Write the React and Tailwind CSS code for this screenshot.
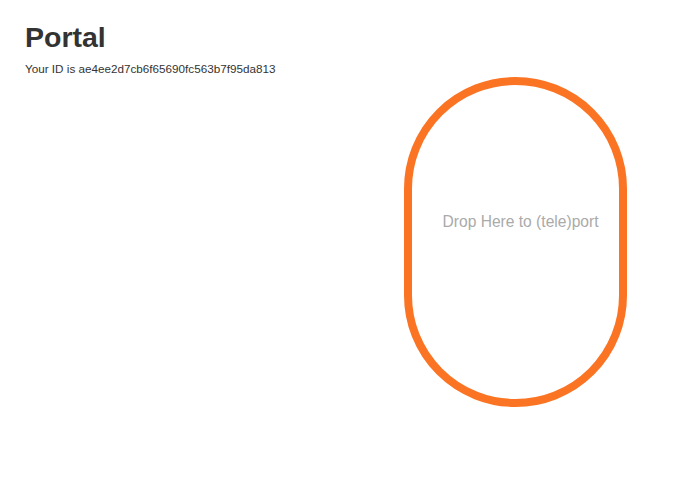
export default function App() {
  return (
    <div className="min-h-screen bg-white pl-[25px] font-['Helvetica_Neue','Liberation_Sans',Arial,sans-serif] text-[#333]">
      <h1 className="pt-[21px] text-[28.5px] font-bold leading-[32px]">Portal</h1>
      <p className="mt-[8px] text-[11.7px] leading-[16px]">Your ID is ae4ee2d7cb6f65690fc563b7f95da813</p>
      <div className="ml-[379px] flex h-[330px] w-[223px] flex-col items-center rounded-full border-[8px] border-[#fb7423] pt-[128px]">
        <span className="pl-[10px] text-[15.6px] leading-[18px] text-[#aaa]">Drop Here to (tele)port</span>
      </div>
    </div>
  );
}
